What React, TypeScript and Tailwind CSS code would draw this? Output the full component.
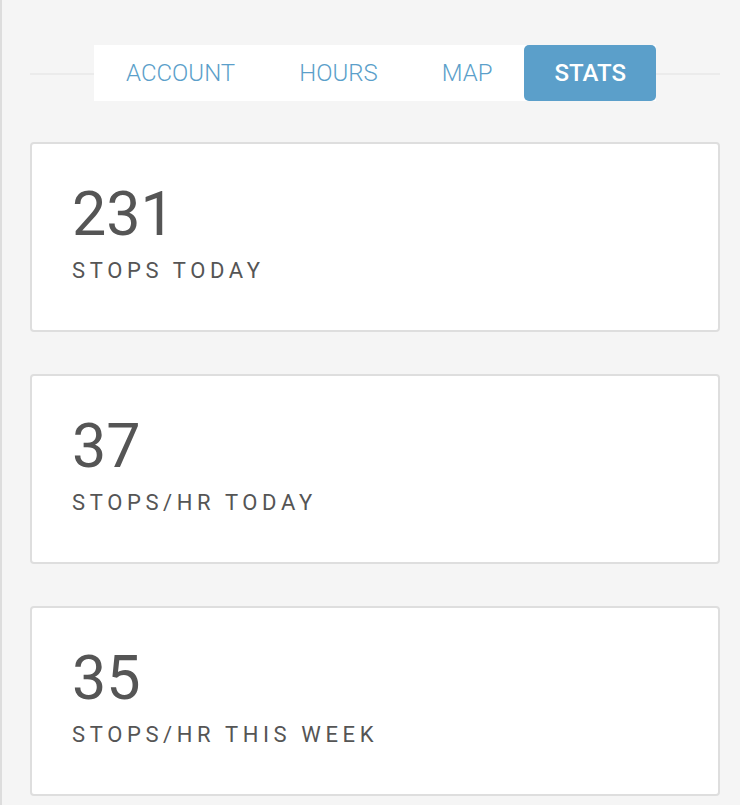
import React, { useState } from "react";

const tabs = ["ACCOUNT", "HOURS", "MAP", "STATS"];

const stats = [
  { value: "231", label: "STOPS TODAY" },
  { value: "37", label: "STOPS/HR TODAY" },
  { value: "35", label: "STOPS/HR THIS WEEK" },
];

const StatCard = ({ value, label }: { value: string; label: string }) => {
  return (
    <div className="bg-white border-2 border-[#dedede] rounded-[4px] pl-10 pt-10 pb-[48px]">
      <div className="text-[61px] leading-none text-[#555555]">{value}</div>
      <div className="mt-[15px] text-[22px] leading-none tracking-[0.21em] text-[#555555]">
        {label}
      </div>
    </div>
  );
};

export default function App() {
  const [active, setActive] = useState("STATS");

  return (
    <div
      className="min-h-[805px] bg-[#f5f5f5] border-l-2 border-[#dddddd] pl-[28px] pr-5 pt-[45px]"
      style={{ fontFamily: "Roboto, 'Noto Sans', sans-serif" }}
    >
      {/* tabs */}
      <div className="relative flex justify-center">
        <div className="absolute left-0 right-0 top-[28px] h-[2px] bg-[#ebebeb]" />
        <div className="relative flex bg-white h-[56px]">
          {tabs.map((tab) => {
            const isActive = tab === active;
            return (
              <button
                key={tab}
                onClick={() => setActive(tab)}
                className={
                  isActive
                    ? "px-[30px] h-full rounded-[5px] bg-[#5b9fca] text-white text-[24px] font-medium"
                    : "px-8 h-full text-[#5b9fca] text-[24px] font-light"
                }
              >
                {tab}
              </button>
            );
          })}
        </div>
      </div>

      {/* cards */}
      <div className="flex flex-col gap-[42px] mt-[41px]">
        {stats.map((stat) => (
          <StatCard key={stat.label} value={stat.value} label={stat.label} />
        ))}
      </div>
    </div>
  );
}
